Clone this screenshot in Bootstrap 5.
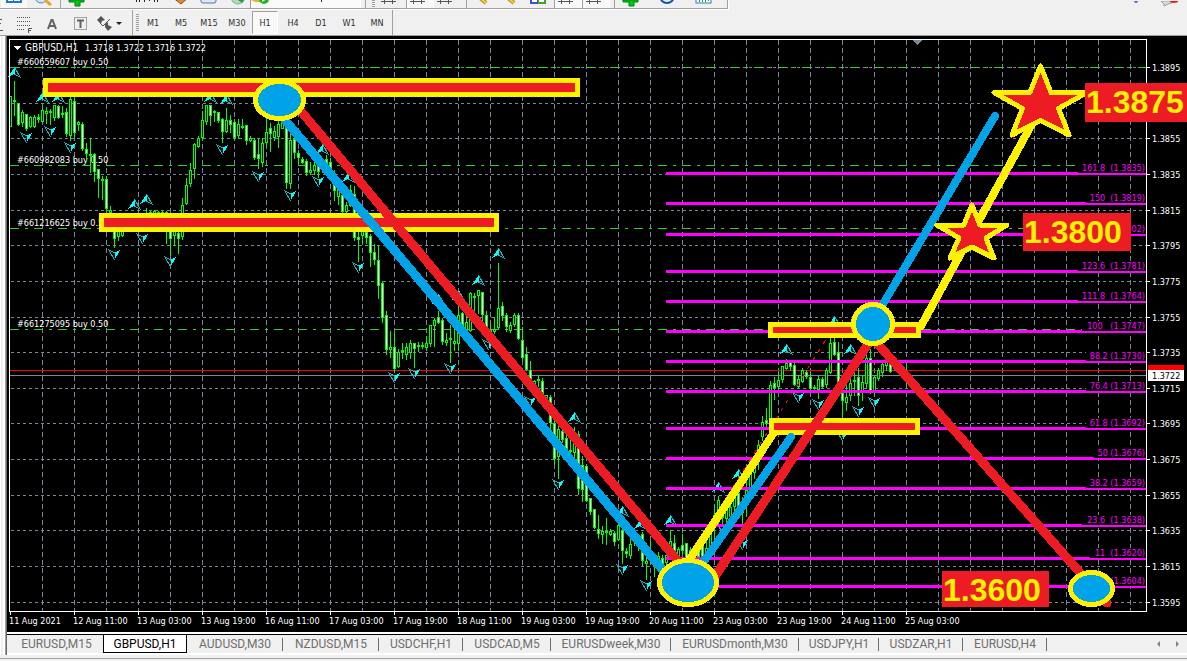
<!DOCTYPE html>
<html lang="en">
<head>
<meta charset="utf-8">
<meta name="viewport" content="width=device-width, initial-scale=1">
<title>GBPUSD,H1</title>
<link href="https://cdn.jsdelivr.net/npm/bootstrap@5.3.0/dist/css/bootstrap.min.css" rel="stylesheet">
<style>
  body { background: #f0f0f0; font-family: "DejaVu Sans Condensed", "DejaVu Sans", sans-serif; font-size: 9px; line-height: 12px; color: #303030; }
  button { border: 0; background: none; padding: 0; color: inherit; }
  .std-bar { height: 9px; border-right: 1px solid #a0a0a0; border-bottom: 1px solid #a0a0a0; box-shadow: 1px 1px 0 #fff; overflow: hidden; padding-right: 9px; }
  .std-bar svg, .alert-icons svg, .period-bar svg { display: block; margin: 0 auto; }
  .tool { width: 28px; flex: none; }
  .tool-wide { width: 44px; flex: none; }
  .tool-mid { width: 38px; flex: none; }
  .tool-auto { width: 111px; flex: none; }
  .tool-gap { width: 36px; flex: none; }
  .pressed { background: #f9f9f9; border-left: 1px solid #a0a0a0; border-right: 1px solid #fff; }
  .split { width: 8px; flex: none; background: linear-gradient(#a0a0a0, #a0a0a0) center / 1px 100% no-repeat; }
  .grip { width: 3px; flex: none; margin: 0 3px; background: repeating-linear-gradient(#a0a0a0 0 1px, transparent 1px 2px); }
  .period-bar { height: 27px; padding-top: 1px; border-bottom: 1px solid #a0a0a0; }
  .period-end { border-right: 1px solid #a0a0a0; padding-right: 1px; }
  .draw-tools { padding: 0 6px; }
  .period { width: 28px; height: 23px; }
  .period.active { width: 26px; margin: 0 1px; border: 1px solid #a0a0a0; border-right-color: #fff; border-bottom-color: #fff; background: #f9f9f9; }
  .dock { width: 7px; flex: none; background: #f0f0f0; border-left: 1px solid #fff; border-right: 1px solid #696969; box-shadow: inset -1px 0 #a0a0a0, inset -3px 0 #fff; }
  .chart { display: block; width: 100%; height: auto; background: #000; }
  .chart text { font-size: 9px; fill: #fff; }
  .chart .symbol { font-size: 10px; }
  .chart .bid { fill: #000; }
  .chart .fib text { fill: #f0f; }
  .chart .target text { font: bold 32px "Liberation Sans", Arial, sans-serif; fill: #fff200; }
  .chart-tabs { border-top: 2px solid #fff; border-bottom: 2px solid #fff; font-family: Roboto, "Open Sans", sans-serif; font-size: 12px; line-height: 18px; height: 23px; }
  .chart-tabs .strip { border-top: 1px solid #000; height: 19px; }
  .chart-tab { color: #6e6e6e; text-decoration: none; text-align: center; white-space: nowrap; flex: none; background: linear-gradient(#6e6e6e, #6e6e6e) right 3px / 1px 13px no-repeat; }
  .chart-tab.first { background: none; width: 96px; padding-left: 3px; }
  .chart-tab.active { color: #000; background: #fff; border: 1px solid #000; border-top: 0; height: 18px; }
  .t80 { width: 80px; } .t84 { width: 84px; } .t88 { width: 88px; } .t96 { width: 96px; } .t120 { width: 120px; } .t128 { width: 128px; }
  .scroll-btn { width: 19px; color: #808080; }
  .status-line { margin-top: 3px; border-top: 1px solid #a0a0a0; height: 3px; }
</style>
</head>
<body>
<header>
  <div class="d-flex justify-content-between">
    <div class="std-bar d-flex" role="toolbar" aria-label="Standard">
      <button class="tool" aria-label="Market watch"><svg width="26" height="8"><path d="M0 0H26V8H0Z" fill="#f9f9f9"/><path d="M5 0H21V3H5Z" fill="#1e74c8"/><path d="M7 0H12V1H7ZM13 0H19V1H13Z" fill="#fff"/></svg></button>
      <button class="tool" aria-label="Strategy tester"><svg width="28" height="8"><circle cx="13" cy="-3" r="6" fill="#cfe4f5" stroke="#4a86b8"/><path d="M17 0L23 5" stroke="#e2a82a" stroke-width="3"/></svg></button>
      <span class="split"></span>
      <button class="tool" aria-label="New order"><svg width="28" height="8"><path d="M5 0H20V2H16V6H11V2H5Z" fill="#00c818" stroke="#087a10"/></svg></button>
      <span class="tool-gap"></span>
      <button class="tool-mid" aria-label="MetaTrader"><svg width="38" height="8"><path d="M8.500 0V2M11.500 0V2M16.500 0V2M21.500 0V1M26.500 0V2M29.500 0V2" stroke="#302010"/></svg></button>
      <button class="tool" aria-label="MetaEditor"><svg width="28" height="8"><path d="M6 -3L15 4L23 -3Z" fill="#d58c3a" stroke="#8e4f15"/></svg></button>
      <button class="tool" aria-label="Terminal"><svg width="28" height="8"><rect x="7" y="-6" width="15" height="9" rx="2" fill="#dfe7f5" stroke="#5572a8"/></svg></button>
      <button class="tool" aria-label="Options"><svg width="28" height="8"><circle cx="16" cy="-3" r="7" fill="#b8d8b4" stroke="#8aa"/><path d="M16 0L20 3L22 0Z" fill="#26a02e"/></svg></button>
      <button class="tool-auto pressed d-flex" aria-label="AutoTrading"><svg class="ms-0" width="28" height="8"><path d="M0 0H9V2H4Z" fill="#e3b735"/><circle cx="13" cy="-1" r="5" fill="#1db41d"/><path d="M11 -3L16 -1L11 2Z" fill="#fff"/></svg><svg class="me-4" width="28" height="8"><path d="M13.500 0V2" stroke="#333"/></svg></button>
      <span class="split"></span><span class="grip"></span>
      <button class="tool" aria-label="Bar chart"><svg width="28" height="8"><path d="M3 1.500H18M6.500 0V4M14.500 0V4" stroke="#555" stroke-width="1"/></svg></button>
      <button class="tool pressed" aria-label="Candlesticks"><svg width="26" height="8"><path d="M3 1.500H18M6.500 0V4M14.500 0V4" stroke="#555"/></svg></button>
      <button class="tool" aria-label="Line chart"><svg width="28" height="8"><path d="M3 1.500H18M6.500 0V4M14.500 0V4" stroke="#555"/></svg></button>
      <span class="split"></span>
      <button class="tool" aria-label="Zoom in"><svg width="28" height="8"><path d="M10 -2L16 3" stroke="#b08818" stroke-width="4"/><path d="M10 -2L16 3" stroke="#f1cf54" stroke-width="2"/></svg></button>
      <button class="tool" aria-label="Zoom out"><svg width="28" height="8"><path d="M10 -2L16 3" stroke="#b08818" stroke-width="4"/><path d="M10 -2L16 3" stroke="#f1cf54" stroke-width="2"/></svg></button>
      <button class="tool" aria-label="Tile windows"><svg width="28" height="8"><path d="M4 0H12V4H4Z" fill="#3558c8"/><path d="M12 0H20V4H12Z" fill="#46a028"/><path d="M6 0H11V2H6ZM13 0H18V2H13Z" fill="#fff"/></svg></button>
      <button class="tool pressed" aria-label="Auto scroll"><svg width="26" height="8"><path d="M3 1.500H18M6.500 0V4M14.500 0V4" stroke="#555"/></svg></button>
      <button class="tool pressed" aria-label="Chart shift"><svg width="26" height="8"><path d="M3 1.500H18M6.500 0V4M14.500 0V4" stroke="#555"/></svg></button>
      <span class="split"></span>
      <button class="tool" aria-label="Indicators"><svg width="28" height="8"><path d="M5 0H20V2H16V6H11V2H5Z" fill="#00c818" stroke="#087a10"/></svg></button>
      <button class="tool-wide" aria-label="Periods"><svg width="44" height="8"><circle cx="21" cy="-4" r="7" fill="#eef" stroke="#1058a8" stroke-width="2"/></svg></button>
      <button class="tool" aria-label="Templates"><svg width="28" height="8"><rect x="6" y="-5" width="15" height="8" fill="#fff" stroke="#2f74c0"/><path d="M9.500 0V2M12.500 0V2M15.500 0V2M18.500 0V1" stroke="#2a9a30"/></svg></button>
    </div>
    <div class="alert-icons d-flex">
      <button class="tool" aria-label="Search"><svg width="28" height="8"><circle cx="9" cy="0" r="2" fill="#3f76c8"/></svg></button>
      <button class="tool me-1" aria-label="Messages"><svg width="28" height="8"><path d="M6 0H22L13 3L9 5V3Z" fill="#dcdce4" stroke="#999"/><path d="M15 0H23V1Q19 3 15 1Z" fill="#e02a1a"/></svg></button>
    </div>
  </div>
  <div class="period-bar d-flex align-items-stretch">
    <div class="period-end d-flex align-items-center" role="toolbar" aria-label="Drawing and periods">
      <svg class="flex-shrink-0 mx-0" width="4" height="23"><path d="M0 8.500H2M0 12.500H1M0 19.500H3" stroke="#555"/></svg>
      <div class="draw-tools d-flex">
        <button class="period" aria-label="Fibonacci"><svg width="20" height="20"><path d="M3 4.500H17M3 8.500H17M3 12.500H17M3 16.500H11" stroke="#555" stroke-dasharray="1 1"/><path d="M14.500 20V15.500H18M14 17.500H17" fill="none" stroke="#555"/></svg></button>
        <button class="period" aria-label="Text"><svg width="20" height="20"><path d="M6 16L9.500 7H10.500L14 16M7 13H13" fill="none" stroke="#606060" stroke-width="2"/></svg></button>
        <button class="period" aria-label="Text label"><svg width="20" height="20"><rect x="4.500" y="4.500" width="12" height="12" fill="none" stroke="#555" stroke-dasharray="1 1"/><path d="M7 7.500H14M10.500 7V15" stroke="#606060" stroke-width="2"/></svg></button>
        <button class="period" aria-label="Arrows"><svg width="28" height="20"><path d="M7 3L11 7L8 8L7 11L3 7Z M11 11L14 9V12L18 14L14 18L11 14Z" fill="#555"/><path d="M6 10L9 13L16 6" fill="none" stroke="#555"/><path d="M22 9H28L25 12Z" fill="#222"/></svg></button>
      </div>
      <span class="split align-self-stretch"></span><span class="grip align-self-stretch my-1 mx-0"></span>
      <button class="period">M1</button><button class="period">M5</button><button class="period">M15</button><button class="period">M30</button><button class="period active">H1</button><button class="period">H4</button><button class="period">D1</button><button class="period">W1</button><button class="period">MN</button>
    </div>
  </div>
</header>

<main class="d-flex">
  <div class="dock"></div>
  <div class="flex-fill">
    <svg class="chart" viewBox="7 36 1180 596" shape-rendering="crispEdges" role="img" aria-label="GBPUSD hourly chart">
      <g id="grid" stroke="#778899" fill="none"></g>
      <g id="orders"></g>
      <path d="M10 370.500H1146" stroke="#f00"/><path d="M10 375.500H1146" stroke="#778899"/>
      <g id="candles" stroke="#0f0"></g>
      <path d="M690 555L832 330" stroke="#f00" stroke-dasharray="4 6" fill="none"/>
      <g id="fractals"></g>
      <g id="fib" class="fib"></g>
      <path d="M9.500 611V39.500H1146.500V611.500H9" fill="none" stroke="#fff"/>
      <path d="M912 40H923L917.500 45Z" fill="#778899"/>
      <path d="M13 46H21L17 50Z" fill="#fff"/>
      <text class="symbol" x="25" y="51">GBPUSD,H1</text>
      <text x="85" y="51">1.3718 1.3722 1.3716 1.3722</text>
      <g id="axes"></g>
      <g><rect x="1148" y="365" width="36" height="6" fill="#f00"/><rect x="1148" y="370" width="36" height="11" fill="#fff"/><text class="bid" x="1152" y="379">1.3722</text></g>

      <g fill="#ed1c24" stroke="#fff200" stroke-width="5">
        <rect x="45.500" y="80.500" width="532" height="14"/>
        <rect x="101.500" y="215.500" width="395" height="14"/>
        <rect x="770.500" y="324.500" width="148" height="11"/>
        <rect x="771.500" y="420.500" width="146" height="12"/>
      </g>
      <g fill="none" stroke-width="9" stroke-linecap="round">
        <path d="M285 120L662 569" stroke="#00a2e8"/>
        <path d="M300 110L682 566" stroke="#ed1c24"/>
        <path d="M773 434L688 562" stroke="#fff200" stroke-width="8"/>
        <path d="M791 437L700 567" stroke="#00a2e8" stroke-width="8"/>
        <path d="M716 575L872 338" stroke="#ed1c24"/>
        <path d="M876 342L1107 603" stroke="#ed1c24"/>
        <path d="M921 326L1033 122" stroke="#fff200" stroke-width="8"/>
        <path d="M880 309L995 116" stroke="#00a2e8" stroke-width="8"/>
      </g>
      <g fill="#00a2e8" stroke="#fff200" stroke-width="5">
        <ellipse cx="279.500" cy="100" rx="24" ry="18.500"/>
        <ellipse cx="688" cy="582.500" rx="28.500" ry="22"/>
        <circle cx="873" cy="324" r="19.500"/>
        <ellipse cx="1091.500" cy="588.500" rx="21" ry="16"/>
      </g>
      <g fill="#ed1c24" stroke="#fff200" stroke-width="5" stroke-linejoin="round">
        <path d="M1040.500 66L1051 92.500H1087L1058.500 108.500L1069 135L1040.500 120.500L1012 135L1022.500 108.500L994 92.500H1030Z"/>
        <path d="M972 205L980 225H1007L986 238L994 258L972 247L950 258L959 238L937 225H964Z"/>
      </g>
      <g class="target">
        <rect x="1085" y="83" width="102" height="39" fill="#ed1c24"/><text x="1086" y="113">1.3875</text>
        <rect x="1023" y="213" width="108" height="38" fill="#ed1c24"/><text x="1024" y="243">1.3800</text>
        <rect x="942" y="571" width="107" height="36" fill="#ed1c24"/><text x="943" y="601">1.3600</text>
      </g>
    </svg>
    <nav class="chart-tabs" aria-label="Charts">
      <div class="strip d-flex">
        <a class="chart-tab first" href="#">EURUSD,M15</a>
        <a class="chart-tab active t84" href="#">GBPUSD,H1</a>
        <a class="chart-tab t96" href="#">AUDUSD,M30</a>
        <a class="chart-tab t96" href="#">NZDUSD,M15</a>
        <a class="chart-tab t84" href="#">USDCHF,H1</a>
        <a class="chart-tab t88" href="#">USDCAD,M5</a>
        <a class="chart-tab t120" href="#">EURUSDweek,M30</a>
        <a class="chart-tab t128" href="#">EURUSDmonth,M30</a>
        <a class="chart-tab t80" href="#">USDJPY,H1</a>
        <a class="chart-tab t84" href="#">USDZAR,H1</a>
        <a class="chart-tab t84" href="#">EURUSD,H4</a>
        <div class="ms-auto d-flex">
          <button class="scroll-btn" aria-label="Scroll left"><svg class="d-block mx-auto" width="5" height="8"><path d="M4 1V7L1 4Z" fill="#808080"/></svg></button>
          <button class="scroll-btn" aria-label="Scroll right"><svg class="d-block mx-auto" width="5" height="8"><path d="M1 1V7L4 4Z" fill="#808080"/></svg></button>
        </div>
      </div>
    </nav>
  </div>
</main>
<div class="status-line"></div>

<script>
const put = (id, markup) => { document.getElementById(id).innerHTML = markup; };
const prices = [[67,3895],[103,3875],[138,3855],[174,3835],[210,3815],[245,3795],[281,3775],[317,3755],[352,3735],[388,3715],[423,3695],[459,3675],[495,3655],[530,3635],[566,3615],[602,3595]];
const times = ['11 Aug 2021','12 Aug 11:00','13 Aug 03:00','13 Aug 19:00','16 Aug 11:00','17 Aug 03:00','17 Aug 19:00','18 Aug 11:00','19 Aug 03:00','19 Aug 19:00','20 Aug 11:00','23 Aug 03:00','23 Aug 19:00','24 Aug 11:00','25 Aug 03:00'];

let grid = '';
for (let x = 42; x < 1146; x += 32) grid += `<path d="M${x}.5 40V611" stroke-dasharray="5 3"/>`;
for (const [y] of prices) grid += `<path d="M11 ${y}.5H1146" stroke-dasharray="3 3"/>`;
put('grid', grid);

let axes = '';
for (const [y, p] of prices) if (y !== 103) axes += `<path d="M1147 ${y}.5H1150" stroke="#fff"/><text x="1152" y="${y + 4}">1.${p}</text>`;
times.forEach((t, i) => { const x = 10 + i * 64; axes += `<path d="M${x}.5 612V615" stroke="#fff"/><text x="${x - 1}" y="624">${t}</text>`; });
put('axes', axes);

put('orders', [[67,'660659607'],[165,'660982083'],[228,'661216625'],[329,'661275095']].map(([y, n]) =>
  `<path d="M10 ${y}.5H1146" stroke="#32cd32" stroke-dasharray="9 6 3 6"/><text x="17" y="${y - 2}">#${n} buy 0.50</text>`).join(''));

const fib = [[173,'161.8  (1.3835)'],[203,'150  (1.3819)'],[234,'02)'],[271,'123.6  (1.3781)'],[301,'111.8  (1.3764)'],[331,'100   (1.3747)'],[361,'88.2 (1.3730)'],[391,'76.4 (1.3713)'],[428,'61.8 (1.3692)'],[458,'50 (1.3676)'],[488,'38.2 (1.3659)'],[525,'23.6  (1.3638)'],[558,'11  (1.3620)'],[586,'(1.3604)']];
put('fib', fib.map(([y, label]) => {
  const w = 8 + label.length * 4;
  return `<path d="M666 ${y}.5H1146" stroke="#f0f" stroke-width="3"/><rect x="${1146 - w}" y="${y - 10}" width="${w}" height="10"/><text x="1145" y="${y - 2}" text-anchor="end">${label.replace(/ /g, '\u00a0')}</text>`;
}).join(''));

// One bar every 4 units: high, body top, body bottom, low, falling
const bars = [
[96,96,126,126,0],[81,100,101,115,1],[103,103,124,125,1],[110,112,122,126,0],[114,114,128,130,1],[116,117,126,127,0],[115,117,126,127,0],[114,117,119,122,1],[107,110,121,122,0],[107,111,113,123,0],[109,111,112,124,0],[105,105,117,120,0],[105,106,117,118,1],[106,113,114,117,1],[108,112,133,136,1],[93,99,135,140,0],[98,101,132,136,1],[121,122,124,130,0],[122,124,148,150,1],[143,149,153,161,1],[138,154,155,172,1],[153,154,171,181,1],[169,169,178,197,1],[176,179,180,199,1],[176,179,208,210,1],[206,210,212,221,0],[215,215,238,247,1],[225,230,236,240,0],[217,220,235,236,0],[215,218,226,230,0],[216,218,226,229,0],[216,218,226,229,0],[216,218,226,229,1],[216,218,226,229,0],[208,214,222,230,0],[211,212,222,228,1],[210,211,222,228,0],[211,212,222,228,1],[211,212,222,228,1],[211,212,230,243,1],[215,230,238,255,1],[225,228,235,245,0],[220,233,238,253,1],[198,205,236,239,0],[178,185,203,204,0],[163,170,183,186,0],[143,144,168,178,0],[136,138,146,147,0],[111,120,137,140,0],[105,105,121,124,0],[105,105,115,125,1],[110,111,112,121,0],[112,112,120,122,1],[118,119,131,142,1],[108,120,131,132,0],[115,120,124,132,1],[119,122,137,139,1],[119,124,135,138,0],[119,126,127,128,1],[125,125,140,144,1],[136,138,140,141,0],[138,140,157,159,1],[138,154,158,168,1],[138,143,162,166,0],[117,132,142,146,0],[123,128,133,151,1],[126,131,137,140,0],[119,124,136,147,0],[120,121,128,128,0],[122,123,182,188,1],[126,140,183,188,0],[138,139,152,158,1],[150,153,157,163,1],[157,159,162,163,1],[159,161,172,175,1],[162,170,172,174,0],[160,165,170,174,0],[163,165,171,177,1],[158,162,167,172,0],[155,159,168,170,1],[158,162,172,178,1],[170,180,190,200,1],[182,188,196,204,0],[188,195,211,214,1],[202,205,211,213,0],[185,190,205,206,0],[186,194,237,240,1],[225,237,239,261,1],[225,230,235,243,0],[228,232,237,243,1],[234,236,252,266,1],[244,252,259,264,1],[246,260,285,298,1],[281,283,317,322,1],[311,315,349,354,1],[331,347,349,357,0],[333,347,368,371,1],[349,352,366,367,0],[343,350,351,358,0],[343,347,354,359,0],[340,343,352,358,0],[343,343,348,367,1],[342,345,346,351,0],[342,345,346,348,0],[336,343,347,350,0],[325,325,343,346,0],[318,320,325,346,0],[311,317,322,323,1],[318,320,341,344,1],[333,340,342,345,0],[325,338,339,362,0],[328,341,343,350,0],[306,315,343,350,0],[312,313,335,336,1],[315,322,335,340,0],[292,293,330,331,0],[293,296,297,312,0],[290,290,295,313,0],[292,292,314,321,1],[311,315,329,332,1],[322,330,331,338,1],[317,329,331,333,0],[263,308,327,328,0],[302,306,315,320,1],[313,315,326,331,1],[322,325,330,332,0],[313,315,324,326,0],[313,315,338,339,1],[327,340,357,361,1],[347,354,369,370,1],[361,370,381,386,1],[380,381,383,387,0],[375,379,380,386,0],[378,381,394,395,1],[395,395,400,407,0],[395,397,422,432,1],[420,423,458,464,1],[425,429,456,478,0],[418,431,439,442,1],[434,438,448,450,1],[430,450,451,459,0],[427,433,452,459,0],[431,434,488,494,1],[456,465,489,501,1],[464,466,500,501,1],[498,498,511,514,1],[509,509,527,528,1],[515,529,533,538,1],[526,531,534,543,0],[518,531,532,544,0],[529,531,534,535,0],[531,533,541,545,1],[523,525,539,540,0],[527,530,550,563,1],[548,551,553,557,1],[539,544,555,558,0],[530,535,540,545,1],[534,536,545,550,1],[532,534,560,565,1],[543,561,563,579,0],[541,552,557,562,0],[555,557,562,576,1],[552,556,562,566,0],[555,558,565,567,1],[548,555,562,566,0],[530,541,547,552,0],[535,543,553,555,1],[547,549,557,558,0],[534,545,550,553,1],[543,543,557,558,1],[547,550,557,558,0],[546,549,556,557,1],[547,551,556,557,1],[544,546,556,557,1],[540,548,556,558,0],[525,530,545,548,0],[505,515,525,540,0],[496,500,516,522,0],[512,515,517,524,1],[508,510,518,526,0],[500,507,516,525,0],[492,497,506,517,0],[488,493,505,512,1],[497,505,512,532,1],[470,490,500,515,0],[460,470,490,500,0],[455,464,472,478,0],[440,445,460,469,0],[416,422,436,440,0],[408,420,423,428,1],[381,385,420,440,0],[377,383,387,399,1],[372,380,386,390,0],[366,366,379,382,0],[359,363,368,369,0],[361,362,366,370,1],[363,365,384,385,1],[375,379,386,388,0],[368,370,381,382,0],[370,372,376,378,1],[372,377,388,389,1],[385,387,388,390,0],[376,379,389,398,0],[377,379,386,388,1],[368,370,384,387,0],[333,343,372,373,0],[338,342,354,355,1],[342,352,382,385,1],[390,393,400,418,1],[385,397,402,410,0],[371,383,395,400,0],[368,380,381,395,0],[368,377,395,405,1],[375,382,392,400,0],[353,358,383,388,0],[349,358,391,393,1],[375,377,391,395,0],[368,370,378,380,0],[360,364,372,376,0],[359,361,365,370,0],[360,362,371,372,1],[361,363,368,370,0],[360,365,366,372,1],[368,370,375,378,1],[360,378,379,386,1]];
put('candles', bars.map(([h, t, b, l, down], i) => {
  const x = 10 + i * 4;
  return `<path d="M${x}.5 ${h}V${l + 1}"/><rect x="${x - .5}" y="${t}.5" width="2" height="${Math.max(b - t, 1)}" fill="${down ? '#fff' : '#000'}"/>`;
}).join(''));

const up = [[14,72],[42,97],[58,97],[134,204],[146,199],[210,97],[226,99],[322,149],[348,177],[438,299],[458,295],[478,280],[498,253],[574,417],[622,511],[640,524],[670,520],[718,487],[738,474],[786,349],[834,321],[850,349]];
const down = [[26,138],[50,132],[70,148],[114,255],[142,239],[170,262],[222,150],[258,177],[290,196],[318,182],[358,268],[394,378],[414,374],[450,369],[488,345],[530,402],[558,485],[622,570],[646,586],[722,528],[742,545],[798,398],[818,405],[842,436],[858,412],[874,403]];
put('fractals',
  up.map(([x, y]) => `<g transform="translate(${x} ${y})"><path d="M.5 -5L-6 5L.5 2Z" fill="#0ff"/><path d="M.5 -5L6 5L.5 2" fill="none" stroke="#20b8b8"/></g>`).join('') +
  down.map(([x, y]) => `<g transform="translate(${x} ${y})"><path d="M.5 5L6 -5L.5 -2Z" fill="#0ff"/><path d="M.5 5L-5 -5L.5 -2" fill="none" stroke="#20b8b8"/></g>`).join(''));
</script>
<script src="https://cdn.jsdelivr.net/npm/bootstrap@5.3.0/dist/js/bootstrap.bundle.min.js"></script>
</body>
</html>
